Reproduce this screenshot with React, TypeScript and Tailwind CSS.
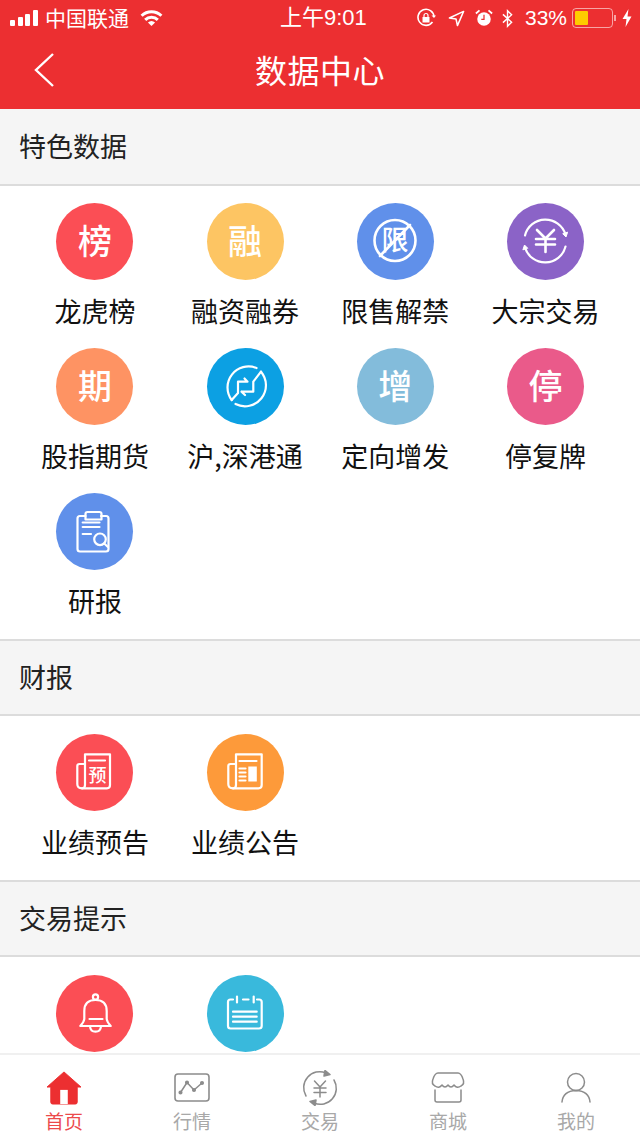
import React from "react";

const glyph = (c: string) => (
  <span className="text-[34px] leading-none font-medium text-white pb-[4px]">{c}</span>
);

const S = ({ children }: { children: React.ReactNode }) => (
  <svg viewBox="0 0 77 77" className="w-[77px] h-[77px]" fill="none" stroke="#fff" strokeWidth="2.2" strokeLinecap="round" strokeLinejoin="round">
    {children}
  </svg>
);

const LimitIcon = () => (
  <S>
    <circle cx="38" cy="37.5" r="20.5" strokeWidth="2.6" />
    <text x="38" y="47" textAnchor="middle" fontSize="27" fill="#fff" stroke="none" fontFamily="'Noto Sans CJK SC', sans-serif" fontWeight="500">限</text>
    <path d="M23 53 L53 22" strokeWidth="2.6" />
  </S>
);

const SwapIcon = () => (
  <S>
    <path d="M18 32.5 A21 21 0 0 1 58.5 31.5" />
    <path d="M56 31 L59 34 L60.5 29.5 Z" fill="#fff" strokeWidth="1" />
    <path d="M58.5 43.5 A21 21 0 0 1 18 44.5" />
    <path d="M20.5 45 L17.5 42 L16 46.5 Z" fill="#fff" strokeWidth="1" />
    <path d="M30 27 L38.5 35.5 L47 27 M29 36 H48 M29 41.5 H48 M38.5 35.5 V49" strokeWidth="2.6" />
  </S>
);

const ConnectIcon = () => (
  <S>
    <path d="M24.7 52 A21 21 0 0 1 49.5 20" />
    <path d="M54 23.7 A21 21 0 0 1 28.5 56" />
    <path d="M24.7 52 L31 45 V33.7 H40.5 M37.5 30.5 L40.5 33.7" />
    <path d="M54 23.7 L46.3 33.7 V43.7 H34.5 M38 47 L34.5 43.7" />
  </S>
);

const ReportIcon = () => (
  <S>
    <path d="M29.5 23 H24 Q21.5 23 21.5 25.5 V56 Q21.5 58.5 24 58.5 H50 Q52.5 58.5 52.5 56 V25.5 Q52.5 23 50 23 H45" />
    <path d="M31.5 19 H43.5 Q45.5 19 45.5 21 V26.5 H29.5 V21 Q29.5 19 31.5 19 Z" />
    <path d="M26.7 29.5 H43.5 M26.7 34 H43.5 M26.7 41 H35" />
    <circle cx="44" cy="46.3" r="5.8" />
    <path d="M48.2 50.5 L51.7 53.8" />
  </S>
);

const PreviewIcon = () => (
  <S>
    <path d="M29 51 V20.3 H54 V51 Q54 54.3 51 54.3 H26" />
    <path d="M29 30 H23.5 Q21.3 30 21.3 32 V50 Q21.3 54.3 26 54.3 Q29 54.3 29 51" />
    <path d="M33 26.5 H49" />
    <text x="41.5" y="48" textAnchor="middle" fontSize="18" fontWeight="500" fill="#fff" stroke="none" fontFamily="'Noto Sans CJK SC', sans-serif">预</text>
  </S>
);

const NoticeIcon = () => (
  <S>
    <path d="M29 51 V20.3 H54.7 V51 Q54.7 54.3 51.5 54.3 H26" />
    <path d="M29 30 H23.5 Q21.3 30 21.3 32 V50 Q21.3 54.3 26 54.3 Q29 54.3 29 51" />
    <path d="M32.5 27 H49.5 M32.5 34.5 H38.5 M32.5 38.5 H38.5 M32.5 42.5 H38.5 M32.5 46.5 H38.5" />
    <rect x="41.3" y="32.5" width="8.5" height="15" fill="#fff" stroke="none" />
  </S>
);

const BellIcon = () => (
  <S>
    <circle cx="39.5" cy="22" r="2.6" />
    <path d="M28.3 44 V36 Q28.3 25 39.5 25 Q50.7 25 50.7 36 V44 Q51 47 54.7 51 H24.3 Q28 47 28.3 44 Z" />
    <path d="M33.5 44 H46.5" />
    <path d="M34 51.5 Q34.5 56.7 39.5 56.7 Q44.5 56.7 45 51.5" />
  </S>
);

const CalendarIcon = () => (
  <S>
    <path d="M26 24.5 H23.5 Q21 24.5 21 27 V51 Q21 53.5 23.5 53.5 H52 Q54.7 53.5 54.7 51 V27 Q54.7 24.5 52 24.5 H50" />
    <path d="M30 21.5 V27.5 M46.7 21.5 V27.5 M36 24.5 H41.5" />
    <path d="M26 36.7 H49.7 M26 41.7 H49.7 M26 46.7 H49.7" />
  </S>
);

type Item = { label?: string; color: string; icon: React.ReactNode };

const Cell = ({ label, color, icon }: Item) => (
  <div className="flex flex-col items-center w-full">
    <div className="w-[77px] h-[77px] rounded-full flex items-center justify-center" style={{ backgroundColor: color }}>
      {icon}
    </div>
    {label ? <div className="mt-[13px] h-[36px] leading-[36px] text-[27px] text-[#111]">{label}</div> : null}
  </div>
);

const Title = ({ children, top }: { children: string; top?: boolean }) => (
  <div className={`h-[77px] bg-[#f5f5f5] border-b-2 border-[#dcdcdc] flex items-center pl-[19px] text-[27px] text-[#222] ${top ? "border-t-2" : ""}`}>
    {children}
  </div>
);

const first: Item[] = [
  { label: "龙虎榜", color: "#fb4e55", icon: glyph("榜") },
  { label: "融资融券", color: "#fdc563", icon: glyph("融") },
  { label: "限售解禁", color: "#6090ea", icon: <LimitIcon /> },
  { label: "大宗交易", color: "#8b63c7", icon: <SwapIcon /> },
  { label: "股指期货", color: "#fe9363", icon: glyph("期") },
  { label: "沪,深港通", color: "#0ca0e3", icon: <ConnectIcon /> },
  { label: "定向增发", color: "#83bcdb", icon: glyph("增") },
  { label: "停复牌", color: "#ea5a8a", icon: glyph("停") },
  { label: "研报", color: "#6090ea", icon: <ReportIcon /> },
];

const second: Item[] = [
  { label: "业绩预告", color: "#fb4e55", icon: <PreviewIcon /> },
  { label: "业绩公告", color: "#fd9a3a", icon: <NoticeIcon /> },
];

const third: Item[] = [
  { color: "#fb4e55", icon: <BellIcon /> },
  { color: "#39b9dc", icon: <CalendarIcon /> },
];

const Grid = ({ items, cls }: { items: Item[]; cls: string }) => (
  <div className={`grid grid-cols-[repeat(4,150.2px)] gap-y-[19px] pl-[19.8px] pb-[20px] ${cls}`}>
    {items.map((i, n) => (
      <Cell key={n} {...i} />
    ))}
  </div>
);

const StatusBar = () => (
  <div className="h-[34px] pt-[2px] flex items-center text-white relative text-[21px]">
    <div className="flex items-center pl-[10px]">
      <div className="flex items-end gap-[2.5px] h-[16px] w-[29px]">
        <div className="w-[5px] h-[6px] bg-white rounded-[1px]" />
        <div className="w-[5px] h-[9px] bg-white rounded-[1px]" />
        <div className="w-[5px] h-[12px] bg-white rounded-[1px]" />
        <div className="w-[5px] h-[16px] bg-white rounded-[1px]" />
      </div>
      <span className="ml-[6px]">中国联通</span>
      <svg viewBox="0 0 26 20" className="ml-[10px] w-[25px] h-[18px]" fill="none" stroke="#fff" strokeWidth="3.4">
        <path d="M2 7.5 A16 16 0 0 1 24 7.5" />
        <path d="M6 12 A10 10 0 0 1 20 12" />
        <path d="M13 19 L9 15 A6 6 0 0 1 17 15 Z" fill="#fff" stroke="none" />
      </svg>
    </div>
    <div className="absolute left-[280px] top-[2px] h-[32px] leading-[32px] text-[22px] font-['Liberation_Sans','Noto_Sans_CJK_SC',sans-serif]">上午9:01</div>
    <div className="ml-auto flex items-center pr-[8px]">
      <svg viewBox="0 0 20 20" className="w-[20px] h-[20px]" fill="none" stroke="#fff" strokeWidth="1.6">
        <path d="M16.5 14 A8 8 0 1 1 18 9" />
        <path d="M15.5 7.5 L18 10 L20 7.5" fill="#fff" stroke="none" />
        <rect x="6.5" y="9" width="7" height="5.5" fill="#fff" stroke="none" />
        <path d="M8 9 V7.5 A2 2 0 0 1 12 7.5 V9" strokeWidth="1.2" />
      </svg>
      <svg viewBox="0 0 18 18" className="ml-[12px] w-[17px] h-[17px]" fill="none" stroke="#fff" strokeWidth="1.6" strokeLinejoin="round">
        <path d="M1.5 8.5 L16.5 1.5 L10 16.5 L8.5 9.5 Z" />
      </svg>
      <svg viewBox="0 0 20 20" className="ml-[10px] w-[18px] h-[18px]">
        <circle cx="10" cy="11" r="7.5" fill="#fff" />
        <path d="M1 5 L5 1.5 M19 5 L15 1.5" stroke="#fff" strokeWidth="2" />
        <path d="M10 6.5 V11.5 H7" stroke="#ec2f31" strokeWidth="1.4" fill="none" />
      </svg>
      <svg viewBox="0 0 12 20" className="ml-[9px] w-[11px] h-[19px]" fill="none" stroke="#fff" strokeWidth="1.5">
        <path d="M1 5.5 L10.5 14 L6 18.5 V1.5 L10.5 6 L1 14.5" />
      </svg>
      <span className="ml-[12px] font-['Liberation_Sans',sans-serif] text-[21px]">33%</span>
      <div className="ml-[5px] w-[41px] h-[20px] rounded-[4px] border border-[#ffffff90] p-[2px]">
        <div className="w-[13px] h-full bg-[#fecb00] rounded-[1px]" />
      </div>
      <div className="w-[2px] h-[6px] bg-[#ffffff90] ml-[1px] mr-[6px]" />
      <svg viewBox="0 0 10 18" className="w-[10px] h-[18px]">
        <path d="M6.5 0 L0.5 10 H4.5 L3.5 18 L9.5 7.5 H5.5 Z" fill="#fff" />
      </svg>
    </div>
  </div>
);

const Tab = ({ label, color, icon }: { label: string; color: string; icon: React.ReactNode }) => (
  <div className="flex flex-col items-center">
    <div className="h-[38px] w-[40px] flex items-center justify-center">{icon}</div>
    <div className="text-[19px] leading-[24px] mt-[2px]" style={{ color }}>{label}</div>
  </div>
);

const HomeIcon = () => (
  <svg viewBox="0 0 40 36" className="w-[38px] h-[34px]">
    <path d="M20 1 L38 17 H34 V33 Q34 35 32 35 H8 Q6 35 6 33 V17 H2 Z" fill="#ec2f31" stroke="#ec2f31" strokeLinejoin="round" />
    <rect x="16" y="20" width="8" height="15" fill="#fff" />
  </svg>
);

const TabStroke = ({ children, box = "0 0 36 36" }: { children: React.ReactNode; box?: string }) => (
  <svg viewBox={box} className="w-[36px] h-[36px]" fill="none" stroke="#8c8c8c" strokeWidth="1.5" strokeLinecap="round" strokeLinejoin="round">
    {children}
  </svg>
);

export default function App() {
  return (
    <div className="w-[640px] h-[1138px] flex flex-col overflow-hidden bg-white font-['Noto_Sans_CJK_SC','Liberation_Sans',sans-serif]">
      <div className="h-[109px] bg-[#ec2f31] shrink-0">
        <StatusBar />
        <div className="h-[75px] pb-[6px] relative flex items-center justify-center text-white text-[32px] tracking-[0.5px]">
          <svg viewBox="0 0 22 36" className="absolute left-[33px] top-[18px] w-[22px] h-[36px]" fill="none" stroke="#fff" strokeWidth="2.4">
            <path d="M20 2 L3 18 L20 34" />
          </svg>
          数据中心
        </div>
      </div>
      <div className="flex-1 min-h-0 overflow-hidden">
        <Title>特色数据</Title>
        <Grid items={first} cls="pt-[17px]" />
        <Title top>财报</Title>
        <Grid items={second} cls="pt-[18px]" />
        <Title top>交易提示</Title>
        <Grid items={third} cls="pt-[18px]" />
      </div>
      <div className="h-[85px] shrink-0 bg-white border-t-2 border-[#f0f0f0] grid grid-cols-5 pt-[14px]">
        <Tab label="首页" color="#ec4a4c" icon={<HomeIcon />} />
        <Tab
          label="行情"
          color="#a8a8a8"
          icon={
            <TabStroke box="0 0 36 30">
              <rect x="1" y="1" width="34" height="27" rx="3" strokeWidth="1.6" />
              <path d="M6.5 19.5 L13 9.5 L20 17 L28 10" strokeWidth="1.5" />
              <circle cx="6.5" cy="19.5" r="1.3" fill="#8c8c8c" />
              <circle cx="13" cy="9.5" r="1.3" fill="#8c8c8c" />
              <circle cx="20" cy="17" r="1.3" fill="#8c8c8c" />
              <circle cx="28" cy="10" r="1.3" fill="#8c8c8c" />
            </TabStroke>
          }
        />
        <Tab
          label="交易"
          color="#a8a8a8"
          icon={
            <TabStroke>
              <path d="M4 26 A16 16 0 0 1 24 3" />
              <path d="M32 10 A16 16 0 0 1 12 33" />
              <path d="M23 0.5 L28 4.5 L22 6 Z" fill="#8c8c8c" />
              <path d="M13 35.5 L8 31.5 L14 30 Z" fill="#8c8c8c" />
              <path d="M12.5 11 L18 17 L23.5 11 M12 18 H24 M12 22.5 H24 M18 17 V27" />
            </TabStroke>
          }
        />
        <Tab
          label="商城"
          color="#a8a8a8"
          icon={
            <TabStroke>
              <path d="M8 3 H28 Q31 3 33 9 Q35 14 31 16 Q27 19 24 15 Q21 19 18 15 Q15 19 12 15 Q9 19 5 16 Q1 14 3 9 Q5 3 8 3 Z" />
              <path d="M5 20 V30 Q5 32 7 32 H29 Q31 32 31 30 V20" />
            </TabStroke>
          }
        />
        <Tab
          label="我的"
          color="#a8a8a8"
          icon={
            <TabStroke>
              <circle cx="18" cy="12" r="8.5" />
              <path d="M4 32 Q5 21 18 20.5 Q31 21 32 32" />
            </TabStroke>
          }
        />
      </div>
    </div>
  );
}
